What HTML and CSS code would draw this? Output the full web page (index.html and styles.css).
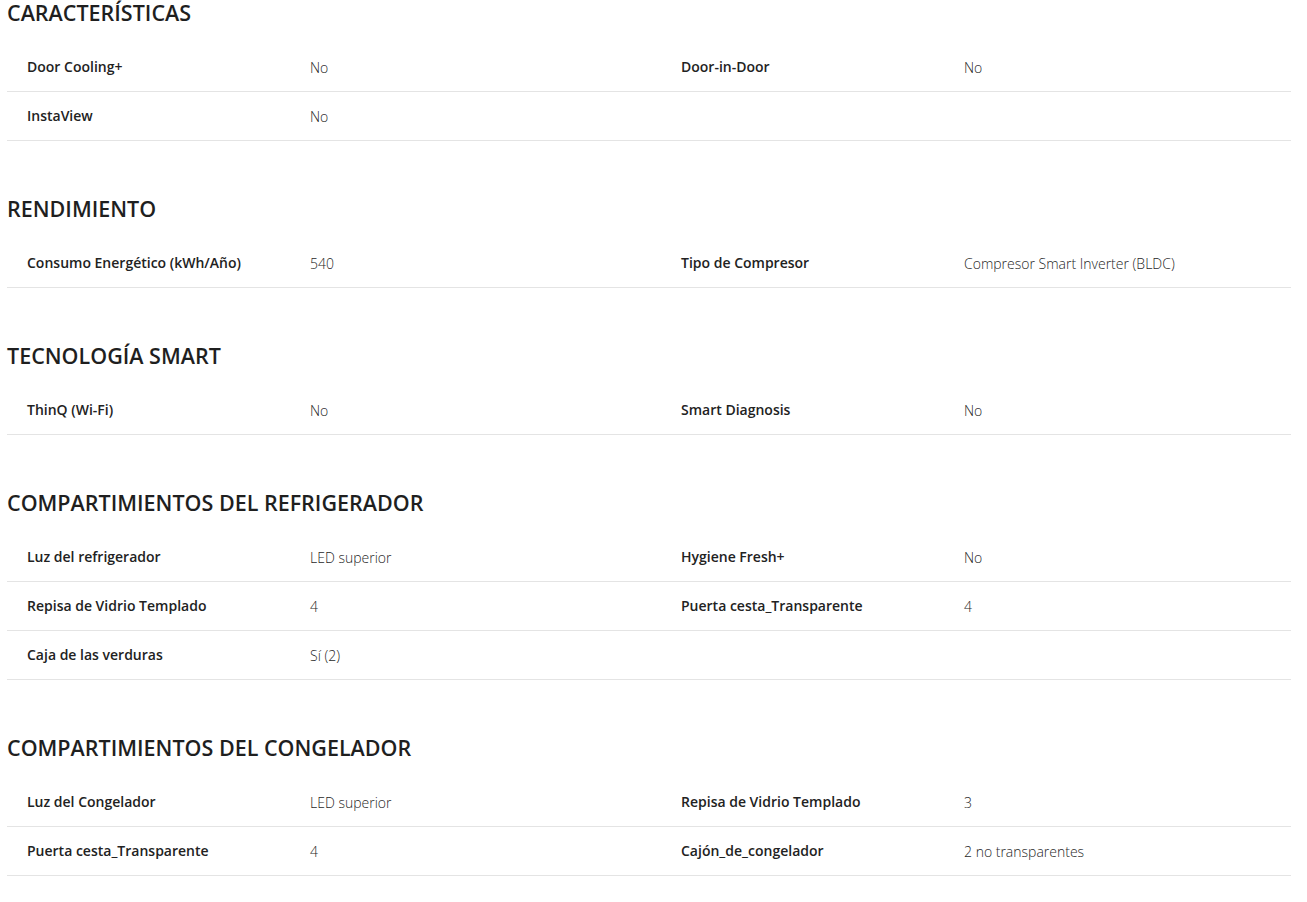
FILE: index.html
```html
<!DOCTYPE html>
<html lang="es">
<head>
<meta charset="utf-8">
<title>Especificaciones</title>
<link rel="stylesheet" href="styles.css">
</head>
<body>
<div class="specs">
  <section class="group">
    <h2 class="group-title">CARACTERÍSTICAS</h2>
    <div class="row">
      <div class="label">Door Cooling+</div><div class="value">No</div>
      <div class="label">Door-in-Door</div><div class="value">No</div>
    </div>
    <div class="row">
      <div class="label">InstaView</div><div class="value">No</div>
      <div class="label"></div><div class="value"></div>
    </div>
  </section>
  <section class="group">
    <h2 class="group-title">RENDIMIENTO</h2>
    <div class="row">
      <div class="label">Consumo Energético (kWh/Año)</div><div class="value">540</div>
      <div class="label">Tipo de Compresor</div><div class="value">Compresor Smart Inverter (BLDC)</div>
    </div>
  </section>
  <section class="group">
    <h2 class="group-title">TECNOLOGÍA SMART</h2>
    <div class="row">
      <div class="label">ThinQ (Wi-Fi)</div><div class="value">No</div>
      <div class="label">Smart Diagnosis</div><div class="value">No</div>
    </div>
  </section>
  <section class="group">
    <h2 class="group-title">COMPARTIMIENTOS DEL REFRIGERADOR</h2>
    <div class="row">
      <div class="label">Luz del refrigerador</div><div class="value">LED superior</div>
      <div class="label">Hygiene Fresh+</div><div class="value">No</div>
    </div>
    <div class="row">
      <div class="label">Repisa de Vidrio Templado</div><div class="value">4</div>
      <div class="label">Puerta cesta_Transparente</div><div class="value">4</div>
    </div>
    <div class="row">
      <div class="label">Caja de las verduras</div><div class="value">Sí (2)</div>
      <div class="label"></div><div class="value"></div>
    </div>
  </section>
  <section class="group">
    <h2 class="group-title">COMPARTIMIENTOS DEL CONGELADOR</h2>
    <div class="row">
      <div class="label">Luz del Congelador</div><div class="value">LED superior</div>
      <div class="label">Repisa de Vidrio Templado</div><div class="value">3</div>
    </div>
    <div class="row">
      <div class="label">Puerta cesta_Transparente</div><div class="value">4</div>
      <div class="label">Cajón_de_congelador</div><div class="value">2 no transparentes</div>
    </div>
  </section>
</div>
</body>
</html>
```
FILE: styles.css
```css
* { box-sizing: border-box; }
html, body { margin: 0; padding: 0; background: #fff; }
body {
  font-family: "Open Sans", "Noto Sans", sans-serif;
  color: #222;
}
.specs {
  padding: 0 16px 0 7px;
}
.group + .group { margin-top: 55px; }
.group-title {
  margin: 0 0 17px;
  font-size: 21.5px;
  line-height: 26px;
  font-weight: 600;
  color: #1f1f1f;
}
.row {
  display: grid;
  grid-template-columns: 283px 371px 283px 1fr;
  padding-left: 20px;
  height: 49px;
  align-items: center;
  border-bottom: 1px solid #e4e4e4;
}
.label {
  font-size: 14px;
  line-height: 18px;
  font-weight: 600;
  color: #222;
}
.value {
  font-size: 14px;
  line-height: 18px;
  font-weight: 300;
  color: #1f1f1f;
  margin-top: 2px;
}
```
